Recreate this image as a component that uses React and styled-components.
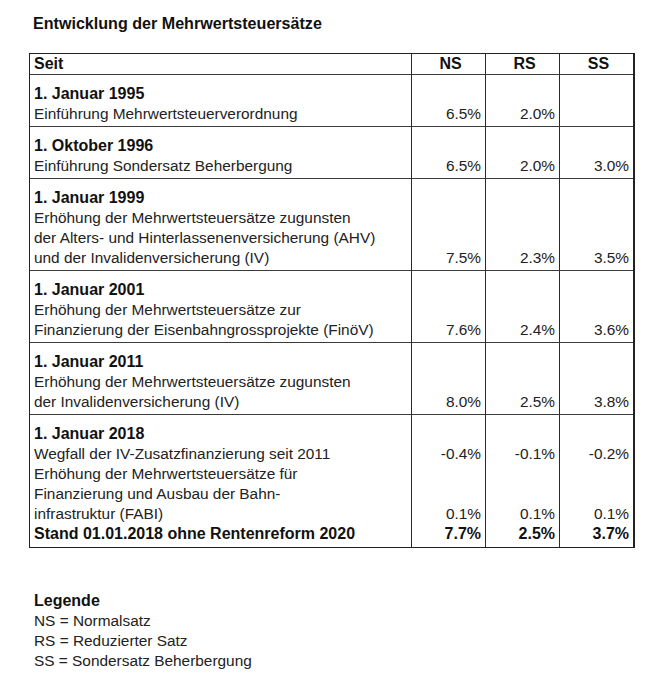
import React from "react";
import styled, { createGlobalStyle } from "styled-components";

const Global = createGlobalStyle`
  html, body { margin: 0; padding: 0; background: #ffffff; }
  body { font-family: "Liberation Sans", Arial, sans-serif; color: #1c1c1c; }
`;

const Page = styled.div`
  width: 662px;
  height: 690px;
  padding: 13px 0 0 29px;
  box-sizing: border-box;
  background: #fff;
`;

const Title = styled.h1`
  margin: 0 0 20px 4px;
  font-size: 16.1px;
  line-height: 20px;
  font-weight: 700;
  color: #111;
`;

const Table = styled.div`
  box-sizing: border-box;
  border: 1px solid #222;
  border-right-width: 2px;
  width: 606px;
`;

const Row = styled.div`
  display: grid;
  grid-template-columns: 381px 74px 74px 74px;
  border-bottom: ${(p) => (p.$last ? "none" : "1px solid #3a3a3a")};
`;

const Cell = styled.div`
  box-sizing: border-box;
  padding: ${(p) => (p.$head ? "0" : "9px")} ${(p) => (p.$num ? "4px" : "0")}
    ${(p) => (p.$head ? "0" : p.$tall ? "3px" : "2px")} ${(p) => (p.$num ? "0" : "4px")};
  border-left: ${(p) => (p.$first ? "none" : "1px solid #2a2a2a")};
  text-align: ${(p) => (p.$center ? "center" : p.$num ? "right" : "left")};
`;

const Line = styled.div`
  height: 20px;
  line-height: 20px;
  white-space: nowrap;
  font-size: ${(p) => (p.$bold ? "16px" : "15.4px")};
  font-weight: ${(p) => (p.$bold ? 700 : 400)};
  color: ${(p) => (p.$bold ? "#111" : "#222")};
`;

const Legend = styled.div`
  margin: 43px 0 0 5px;
`;

const groups = [
  {
    lines: [
      { t: "1. Januar 1995", b: true },
      { t: "Einführung Mehrwertsteuerverordnung", v: ["6.5%", "2.0%", ""] },
    ],
  },
  {
    lines: [
      { t: "1. Oktober 1996", b: true },
      { t: "Einführung Sondersatz Beherbergung", v: ["6.5%", "2.0%", "3.0%"] },
    ],
  },
  {
    lines: [
      { t: "1. Januar 1999", b: true },
      { t: "Erhöhung der Mehrwertsteuersätze zugunsten" },
      { t: "der Alters- und Hinterlassenenversicherung (AHV)" },
      { t: "und der Invalidenversicherung (IV)", v: ["7.5%", "2.3%", "3.5%"] },
    ],
  },
  {
    lines: [
      { t: "1. Januar 2001", b: true },
      { t: "Erhöhung der Mehrwertsteuersätze zur" },
      { t: "Finanzierung der Eisenbahngrossprojekte (FinöV)", v: ["7.6%", "2.4%", "3.6%"] },
    ],
  },
  {
    lines: [
      { t: "1. Januar 2011", b: true },
      { t: "Erhöhung der Mehrwertsteuersätze zugunsten" },
      { t: "der Invalidenversicherung (IV)", v: ["8.0%", "2.5%", "3.8%"] },
    ],
  },
  {
    lines: [
      { t: "1. Januar 2018", b: true },
      { t: "Wegfall der IV-Zusatzfinanzierung seit 2011", v: ["-0.4%", "-0.1%", "-0.2%"] },
      { t: "Erhöhung der Mehrwertsteuersätze für" },
      { t: "Finanzierung und Ausbau der Bahn-" },
      { t: "infrastruktur (FABI)", v: ["0.1%", "0.1%", "0.1%"] },
      { t: "Stand 01.01.2018 ohne Rentenreform 2020", b: true, v: ["7.7%", "2.5%", "3.7%"] },
    ],
  },
];

export default function App() {
  return (
    <Page>
      <Global />
      <Title>Entwicklung der Mehrwertsteuersätze</Title>
      <Table>
        <Row>
          <Cell $head $first>
            <Line $bold>Seit</Line>
          </Cell>
          {["NS", "RS", "SS"].map((h) => (
            <Cell $head $center key={h}>
              <Line $bold>{h}</Line>
            </Cell>
          ))}
        </Row>
        {groups.map((g, gi) => {
          const last = gi === groups.length - 1;
          return (
            <Row key={gi} $last={last}>
              <Cell $first $tall={last}>
                {g.lines.map((l, li) => (
                  <Line key={li} $bold={l.b}>
                    {l.t}
                  </Line>
                ))}
              </Cell>
              {[0, 1, 2].map((ci) => (
                <Cell $num $tall={last} key={ci}>
                  {g.lines.map((l, li) => (
                    <Line key={li} $bold={l.b}>
                      {l.v ? l.v[ci] : ""}
                    </Line>
                  ))}
                </Cell>
              ))}
            </Row>
          );
        })}
      </Table>
      <Legend>
        <Line $bold>Legende</Line>
        <Line>NS = Normalsatz</Line>
        <Line>RS = Reduzierter Satz</Line>
        <Line>SS = Sondersatz Beherbergung</Line>
      </Legend>
    </Page>
  );
}
